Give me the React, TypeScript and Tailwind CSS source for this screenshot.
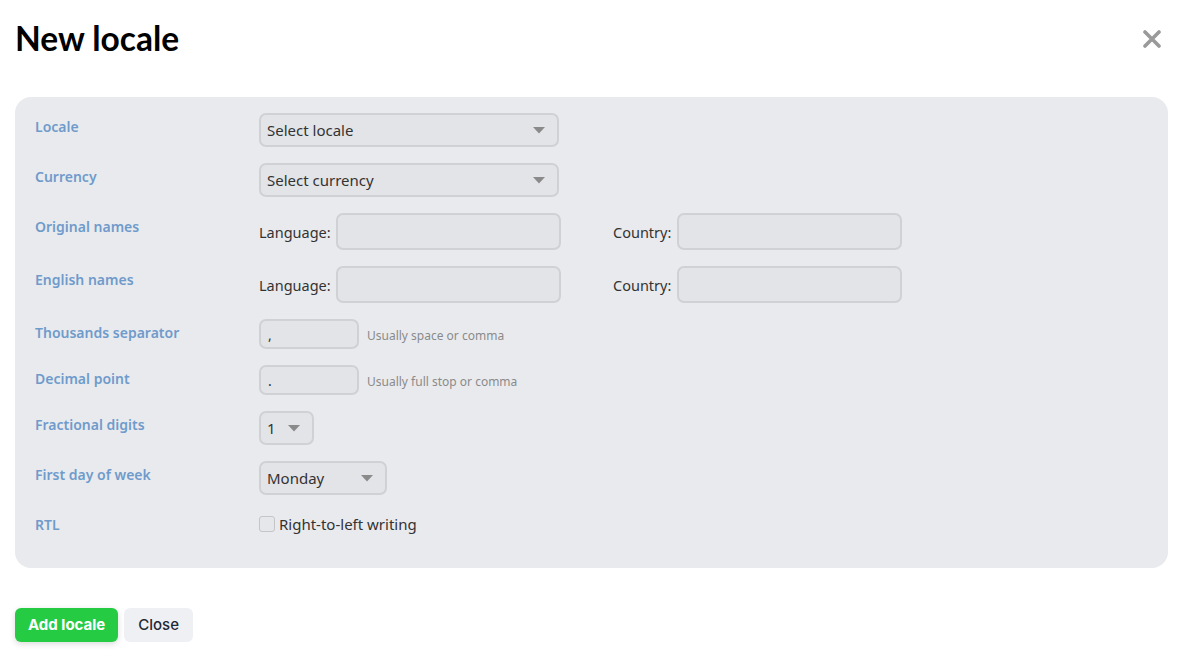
import React from "react";

const bodyFont = { fontFamily: '"Noto Sans", "Open Sans", sans-serif' };

function Caret() {
  return (
    <svg width="12" height="7" viewBox="0 0 12 7" className="shrink-0">
      <path d="M0 0 H12 L6 6.5 Z" fill="#8a8a8a" />
    </svg>
  );
}

function SelectBox({ value, width }: { value: string; width: string }) {
  return (
    <div
      className={`${width} h-[34px] flex items-center justify-between pl-[6px] pr-[12px] rounded-[7px] border-2 border-[#d0d1d5] bg-[#e3e4e8] text-[15px] text-[#333]`}
    >
      <span>{value}</span>
      <Caret />
    </div>
  );
}

function TextBox({ className }: { className: string }) {
  return <div className={`${className} rounded-[7px] border-2 border-[#d0d1d5] bg-[#e3e4e8]`} />;
}

function Row({ label, children }: { label: string; children: React.ReactNode }) {
  return (
    <div className="flex items-start">
      <div className="w-[224px] shrink-0 pt-1 text-[14px] leading-5 font-semibold text-[#6f9bcb]">{label}</div>
      <div className="flex-1">{children}</div>
    </div>
  );
}

function NamePair() {
  return (
    <div className="flex items-center text-[14.5px] text-[#333]">
      <span className="w-[77px] pt-[2px]">Language:</span>
      <TextBox className="w-[225px] h-[37px]" />
      <span className="ml-[52px] w-[64px] pt-[2px]">Country:</span>
      <TextBox className="w-[225px] h-[37px]" />
    </div>
  );
}

function SmallInput({ value, hint }: { value: string; hint: string }) {
  return (
    <div className="flex items-center">
      <div className="w-[100px] h-[30px] flex items-center pl-[7px] rounded-[7px] border-2 border-[#d0d1d5] bg-[#e3e4e8] text-[14px] text-[#333]">
        {value}
      </div>
      <span className="ml-[8px] pt-[4px] text-[12px] text-[#8a8a8a]">{hint}</span>
    </div>
  );
}

export default function App() {
  return (
    <div className="w-[1180px] h-[650px] bg-white pl-[15px] pr-[12px] pt-[18px]" style={bodyFont}>
      <div className="flex items-center justify-between">
        <h1 className="text-[33.5px] leading-[40px] font-bold text-black" style={{ fontFamily: "Lato, sans-serif" }}>
          New locale
        </h1>
        <svg width="18" height="18" viewBox="0 0 18 18" className="mr-[7px] mt-[2px]">
          <path d="M2 2 L16 16 M16 2 L2 16" stroke="#9a9a9a" strokeWidth="3.6" strokeLinecap="round" />
        </svg>
      </div>

      <div className="mt-[39px] rounded-[16px] bg-[#e9eaee] pl-[20px] pr-[20px] pt-[16px] pb-[31px] flex flex-col gap-4">
        <Row label="Locale">
          <SelectBox value="Select locale" width="w-[300px]" />
        </Row>
        <Row label="Currency">
          <SelectBox value="Select currency" width="w-[300px]" />
        </Row>
        <Row label="Original names">
          <NamePair />
        </Row>
        <Row label="English names">
          <NamePair />
        </Row>
        <Row label="Thousands separator">
          <SmallInput value="," hint="Usually space or comma" />
        </Row>
        <Row label="Decimal point">
          <SmallInput value="." hint="Usually full stop or comma" />
        </Row>
        <Row label="Fractional digits">
          <div className="w-[55px] h-[34px] flex items-center justify-between pl-[6px] pr-[12px] rounded-[7px] border-2 border-[#d0d1d5] bg-[#e3e4e8] text-[15px] text-[#333]">
            <span>1</span>
            <Caret />
          </div>
        </Row>
        <Row label="First day of week">
          <SelectBox value="Monday" width="w-[128px]" />
        </Row>
        <Row label="RTL">
          <label className="flex items-center h-[26px] text-[15px] text-[#333]">
            <span className="w-[16px] h-[16px] rounded-[3px] border border-[#c4c5c9] bg-[#e6e7ea] mr-[4px]" />
            Right-to-left writing
          </label>
        </Row>
      </div>

      <div className="mt-[40px] flex gap-[6px]" style={{ fontFamily: "Inter, sans-serif" }}>
        <button className="h-[34px] px-[13px] rounded-[6px] bg-[#25cb43] text-white text-[15px] font-bold shadow-[0_2px_6px_rgba(0,0,0,0.15)]">
          Add locale
        </button>
        <button className="h-[34px] px-[14px] rounded-[6px] bg-[#eef0f4] text-[#1f2937] text-[15px] font-medium">
          Close
        </button>
      </div>
    </div>
  );
}
